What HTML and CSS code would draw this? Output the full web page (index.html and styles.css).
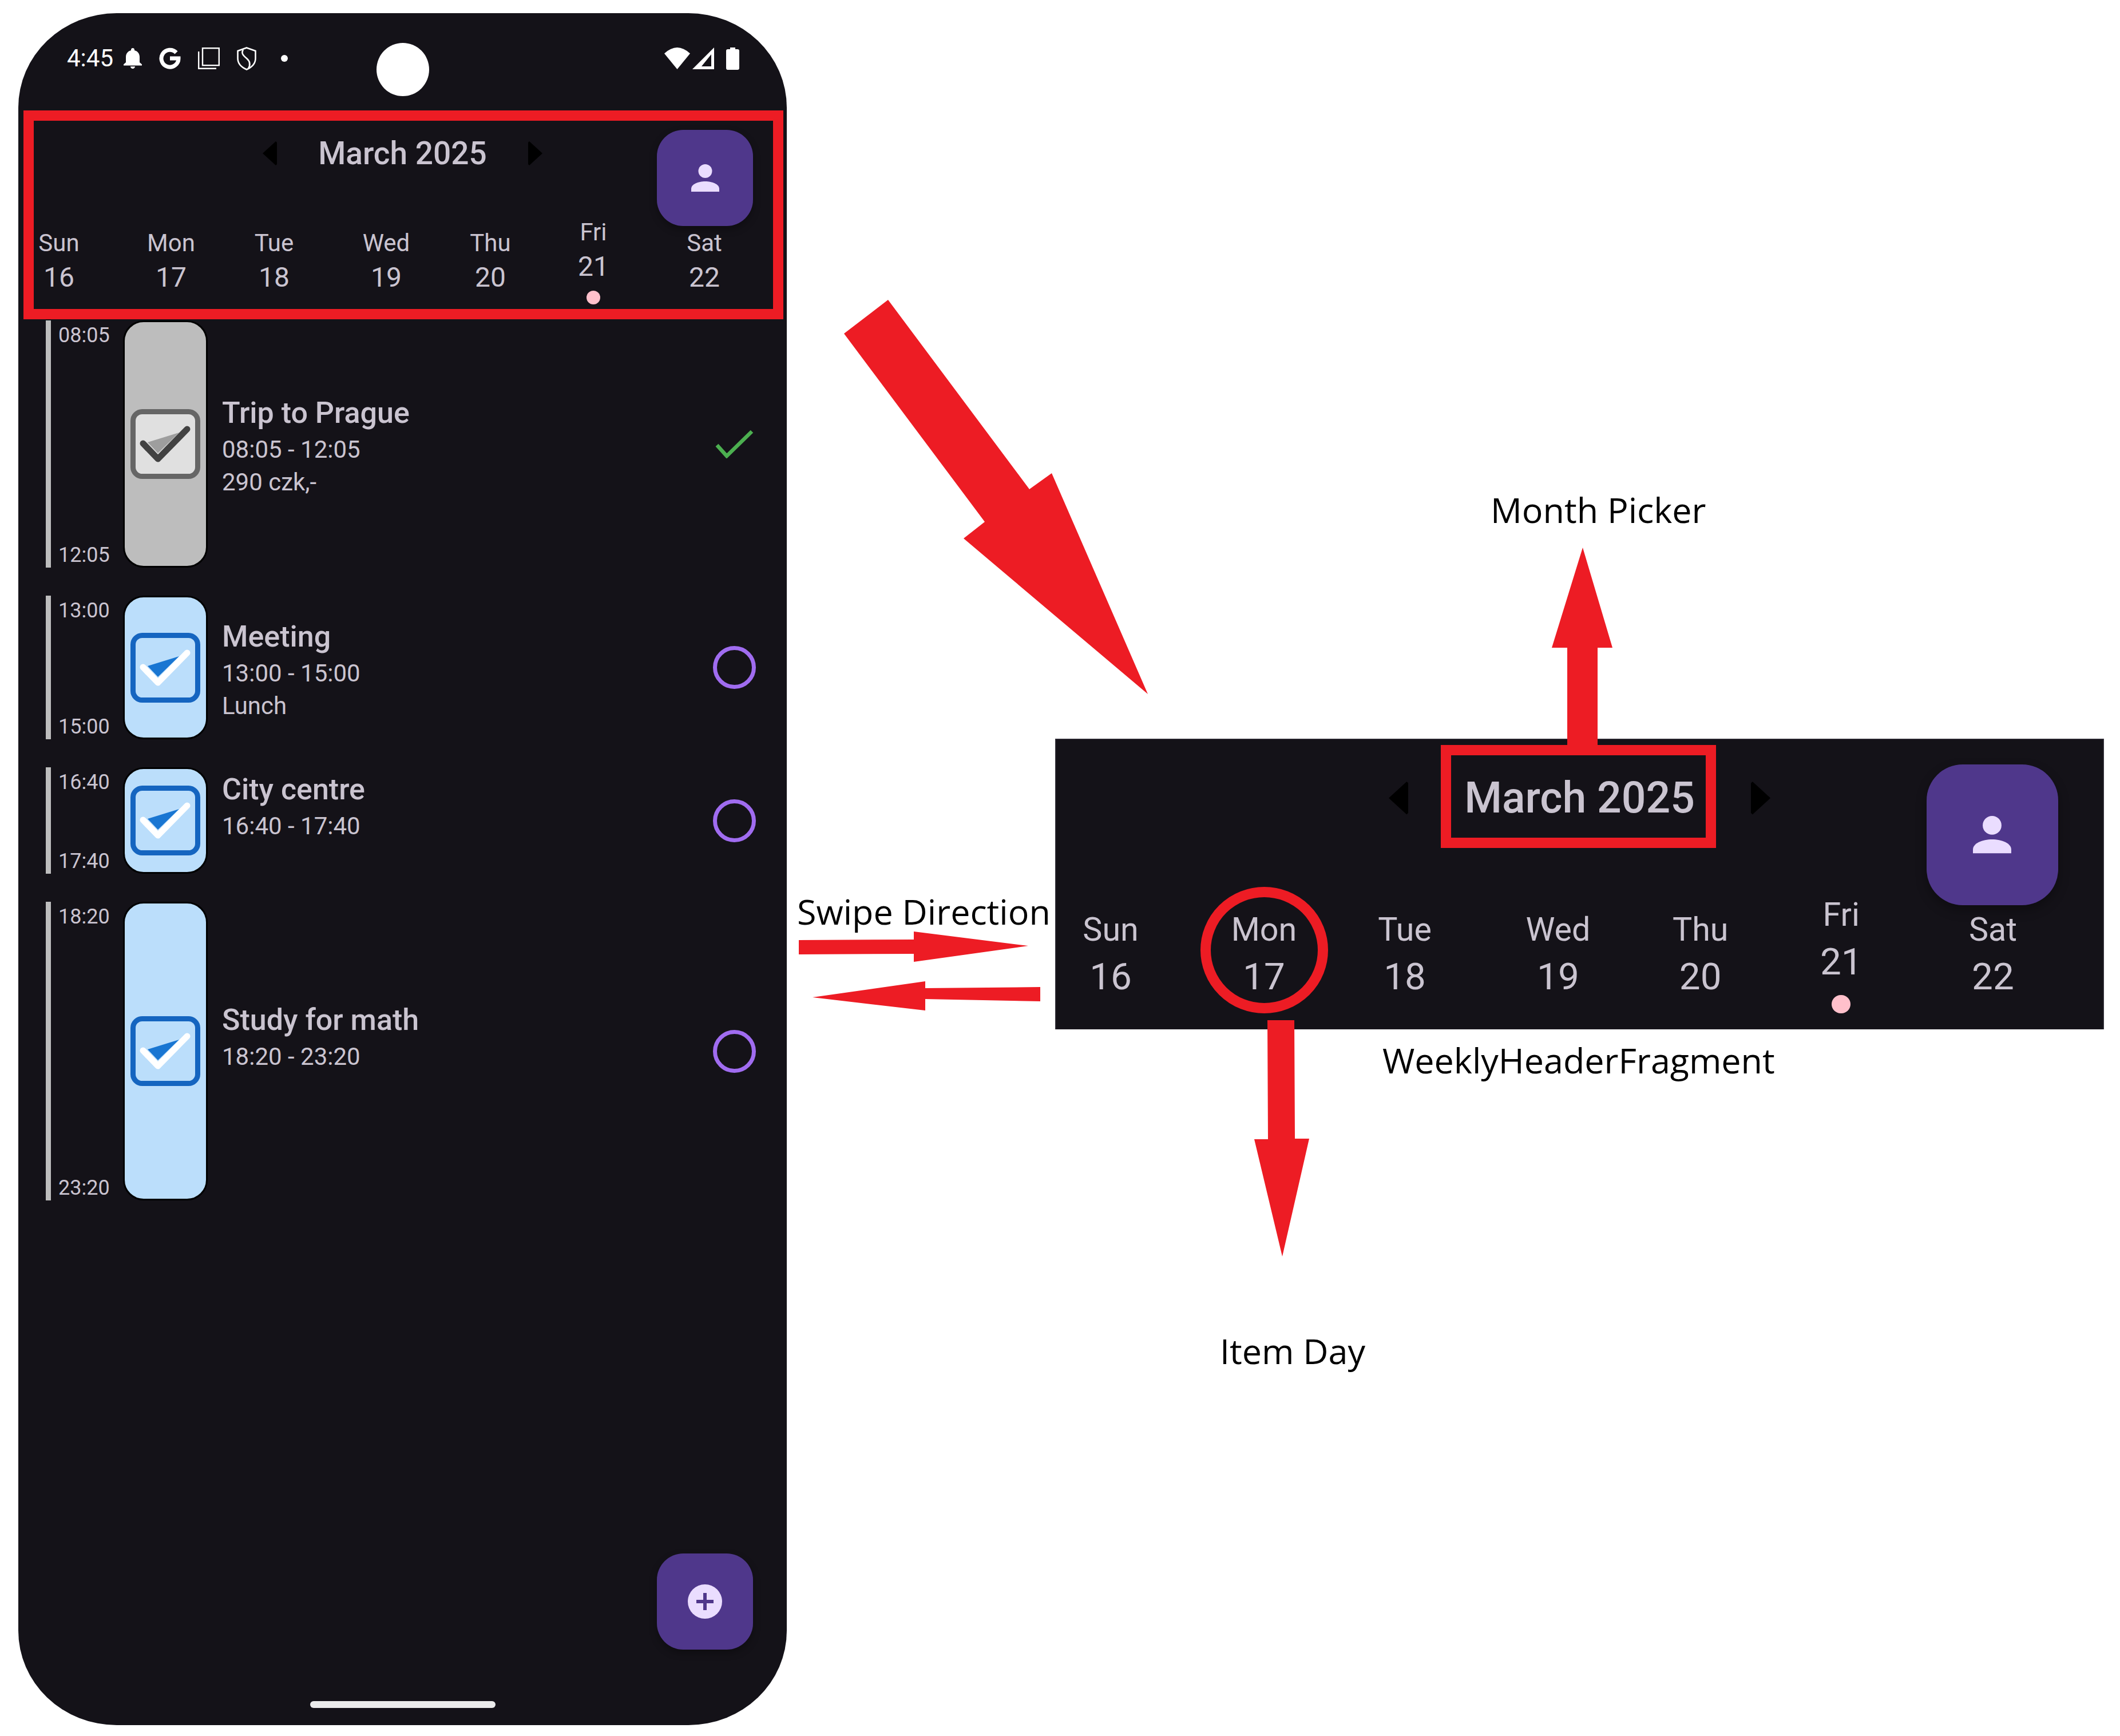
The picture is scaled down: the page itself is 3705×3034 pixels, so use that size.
FILE: index.html
```html
<!DOCTYPE html>
<html lang="en">
<head>
<meta charset="utf-8">
<title>Weekly header annotated</title>
<link rel="stylesheet" href="styles.css">
</head>
<body>
<svg class="defs" width="0" height="0" aria-hidden="true">
  <symbol id="task-icon" viewBox="0 0 122 122">
    <rect class="task-frame" x="4.5" y="4.5" width="113" height="113" rx="16"/>
    <polygon class="task-shade" points="30,58 85,41 48,77"/>
    <polyline class="task-tick" points="22,60 48,87 99,35"/>
  </symbol>
  <symbol id="person" viewBox="0 0 49 48">
    <circle cx="24.5" cy="12" r="12"/>
    <path d="M0 48V43C0 35 12 30 24.5 30S49 35 49 43V48Z"/>
  </symbol>
  <symbol id="chev-left" viewBox="0 0 25 42">
    <polygon points="0,21 23,0 25,2 25,40 23,42"/>
  </symbol>
  <symbol id="chev-right" viewBox="0 0 25 42">
    <polygon points="25,21 2,0 0,2 0,40 2,42"/>
  </symbol>
</svg>

<main class="stage">
  <section class="phone">
    <div class="status-bar">
      <div class="status-left">
        <span class="clock">4:45</span>
        <svg class="ic-bell" viewBox="4 2.5 16 19.5" preserveAspectRatio="none"><path d="M12 22c1.1 0 2-.9 2-2h-4c0 1.1.9 2 2 2zm6-6v-5c0-3.07-1.63-5.64-4.5-6.32V4c0-.83-.67-1.5-1.5-1.5s-1.5.67-1.5 1.5v.68C7.64 5.36 6 7.92 6 11v5l-2 2v1h16v-1l-2-2z"/></svg>
        <svg class="ic-g" viewBox="0 0 38 38"><path d="M30 9A15 15 0 1 0 34 19H19"/></svg>
        <svg class="ic-copy" viewBox="0 0 38 38"><rect x="8" y="1.2" width="28.8" height="30"/><path d="M1.2 7V36.8H32"/></svg>
        <svg class="ic-shield" viewBox="0 0 34 41"><path d="M17 1.5L32.5 7V20C32.5 30 25 36 17 39.5C9 36 1.5 30 1.5 20V7Z"/><path d="M11 5C7 11 11 15 17 20C23 25 24 31 20 38"/></svg>
        <span class="status-dot"></span>
      </div>
      <div class="status-right">
        <svg class="ic-wifi" viewBox="0 0 45 38"><path d="M22.5 38L0 10.5Q22.5-10.5 45 10.5Z"/></svg>
        <svg class="ic-signal" viewBox="0 0 38 38"><path fill-rule="evenodd" d="M0 38L38 0V38ZM16 33H33V12Z"/></svg>
        <svg class="ic-battery" viewBox="0 0 23 39"><path d="M7 0H16V3H20A3 3 0 0 1 23 6V36A3 3 0 0 1 20 39H3A3 3 0 0 1 0 36V6A3 3 0 0 1 3 3H7Z"/></svg>
      </div>
    </div>
    <span class="camera"></span>

    <header class="week-header">
      <div class="month-row">
        <svg class="chev"><use href="#chev-left"/></svg>
        <h1 class="month-title">March 2025</h1>
        <svg class="chev"><use href="#chev-right"/></svg>
      </div>
      <button class="fab profile-btn" type="button" aria-label="Profile"><svg class="person"><use href="#person"/></svg></button>
      <div class="days">
        <div class="day"><span class="day-name">Sun</span><span class="day-num">16</span></div>
        <div class="day"><span class="day-name">Mon</span><span class="day-num">17</span></div>
        <div class="day"><span class="day-name">Tue</span><span class="day-num">18</span></div>
        <div class="day"><span class="day-name">Wed</span><span class="day-num">19</span></div>
        <div class="day"><span class="day-name">Thu</span><span class="day-num">20</span></div>
        <div class="day"><span class="day-name">Fri</span><span class="day-num">21</span><span class="day-dot"></span></div>
        <div class="day"><span class="day-name">Sat</span><span class="day-num">22</span></div>
      </div>
    </header>

    <ul class="agenda">
      <li class="task dur-trip done">
        <div class="rail"><span>08:05</span><span>12:05</span></div>
        <div class="task-card"><svg class="task-icon"><use href="#task-icon"/></svg></div>
        <div class="task-text">
          <h2 class="task-title">Trip to Prague</h2>
          <p class="task-sub">08:05 - 12:05</p>
          <p class="task-sub">290 czk,-</p>
        </div>
        <div class="task-state"><svg class="state-check" viewBox="0 0 67 50"><polyline points="3,27 20,46 64,3"/></svg></div>
      </li>
      <li class="task dur-meeting">
        <div class="rail"><span>13:00</span><span>15:00</span></div>
        <div class="task-card"><svg class="task-icon"><use href="#task-icon"/></svg></div>
        <div class="task-text">
          <h2 class="task-title">Meeting</h2>
          <p class="task-sub">13:00 - 15:00</p>
          <p class="task-sub">Lunch</p>
        </div>
        <div class="task-state"><span class="state-ring"></span></div>
      </li>
      <li class="task dur-city">
        <div class="rail"><span>16:40</span><span>17:40</span></div>
        <div class="task-card"><svg class="task-icon"><use href="#task-icon"/></svg></div>
        <div class="task-text">
          <h2 class="task-title">City centre</h2>
          <p class="task-sub">16:40 - 17:40</p>
          <p class="task-sub"></p>
        </div>
        <div class="task-state"><span class="state-ring"></span></div>
      </li>
      <li class="task dur-study">
        <div class="rail"><span>18:20</span><span>23:20</span></div>
        <div class="task-card"><svg class="task-icon"><use href="#task-icon"/></svg></div>
        <div class="task-text">
          <h2 class="task-title">Study for math</h2>
          <p class="task-sub">18:20 - 23:20</p>
          <p class="task-sub"></p>
        </div>
        <div class="task-state"><span class="state-ring"></span></div>
      </li>
    </ul>

    <button class="fab add-btn" type="button" aria-label="Add">
      <svg class="add-icon" viewBox="0 0 60 60"><circle cx="30" cy="30" r="30"/><path d="M27 15H33V27H45V33H33V45H27V33H15V27H27Z"/></svg>
    </button>
    <span class="home-bar"></span>
  </section>

  <section class="zoom-frame">
    <header class="week-header week-header--zoomed">
      <div class="month-row">
        <svg class="chev"><use href="#chev-left"/></svg>
        <h2 class="month-title">March 2025</h2>
        <svg class="chev"><use href="#chev-right"/></svg>
      </div>
      <button class="fab profile-btn" type="button" aria-label="Profile"><svg class="person"><use href="#person"/></svg></button>
      <div class="days">
        <div class="day"><span class="day-name">Sun</span><span class="day-num">16</span></div>
        <div class="day"><span class="day-name">Mon</span><span class="day-num">17</span></div>
        <div class="day"><span class="day-name">Tue</span><span class="day-num">18</span></div>
        <div class="day"><span class="day-name">Wed</span><span class="day-num">19</span></div>
        <div class="day"><span class="day-name">Thu</span><span class="day-num">20</span></div>
        <div class="day"><span class="day-name">Fri</span><span class="day-num">21</span><span class="day-dot"></span></div>
        <div class="day"><span class="day-name">Sat</span><span class="day-num">22</span></div>
      </div>
    </header>
  </section>

  <svg class="marks" viewBox="0 0 3705 3034">
    <rect class="mark-line" x="50" y="202" width="1310" height="347"/>
    <rect class="mark-line" x="2527" y="1311" width="463" height="162"/>
    <ellipse class="mark-line" cx="2209.5" cy="1660.5" rx="102.5" ry="101.5"/>
    <polygon class="mark-fill" points="1552,524 1475,583 1721,912 1684,941 2006,1213 1838,827 1799,855"/>
    <polygon class="mark-fill" points="2739,1302 2739,1132 2712,1132 2766,957 2818,1132 2792,1132 2792,1302"/>
    <polygon class="mark-fill" points="2215,1783 2262,1783 2263,1990 2288,1990 2241,2196 2192,1991 2216,1991"/>
    <polygon class="mark-fill" points="1396,1643 1597,1642 1597,1628 1797,1653 1597,1681 1597,1667 1396,1668"/>
    <polygon class="mark-fill" points="1818,1725 1617,1727 1617,1715 1420,1743 1617,1766 1617,1746 1818,1750"/>
  </svg>

  <p class="note note-month">Month Picker</p>
  <p class="note note-swipe">Swipe Direction</p>
  <p class="note note-weekly">WeeklyHeaderFragment</p>
  <p class="note note-item">Item Day</p>
</main>
</body>
</html>
```
FILE: styles.css
```css
* { box-sizing: border-box; }
html, body { margin: 0; padding: 0; background: #fff; }
.defs { position: absolute; }
.stage { position: relative; width: 3705px; height: 3034px; overflow: hidden; background: #fff; font-family: Roboto, "Liberation Sans", sans-serif; }

/* phone */
.phone { position: absolute; left: 32px; top: 23px; width: 1343px; height: 2992px; background: #141218; border-radius: 172px / 165px; color: #cac4d0; overflow: hidden; }

.status-bar { height: 169px; padding: 59px 83px 0 85px; display: flex; justify-content: space-between; align-items: flex-start; color: #fff; }
.status-left, .status-right { display: flex; align-items: center; height: 40px; }
.status-left { gap: 30px; }
.status-left svg, .status-right svg { fill: #fff; flex: none; }
.clock { font-size: 42px; line-height: 40px; margin-right: -12px; color: #fff; }
.ic-bell { width: 32px; height: 36px; }
.ic-g { width: 38px; height: 38px; }
.status-left .ic-g { fill: none; stroke: #fff; stroke-width: 7; }
.ic-copy { width: 38px; height: 38px; }
.status-left .ic-copy { fill: none; stroke: #fff; stroke-width: 2.4; }
.ic-shield { width: 34px; height: 41px; }
.status-left .ic-shield { fill: none; stroke: #fff; stroke-width: 2.6; }
.status-dot { width: 12px; height: 12px; border-radius: 50%; background: #fff; margin-left: 13px; }
.status-right { gap: 4px; }
.ic-wifi { width: 45px; height: 38px; }
.ic-signal { width: 38px; height: 38px; }
.ic-battery { width: 23px; height: 39px; margin-left: 17px; }
.camera { position: absolute; left: 626px; top: 52px; width: 92px; height: 93px; border-radius: 50%; background: #fff; }

/* weekly header */
.week-header { position: relative; background: #141218; color: #cac4d0; width: 1343px; height: 368px; padding-top: 44px; }
.month-row { display: flex; justify-content: center; align-items: center; gap: 72px; height: 64px; }
.month-title { margin: 0; font-size: 55px; font-weight: 500; line-height: 64px; white-space: nowrap; }
.chev { width: 25px; height: 42px; fill: #000; flex: none; }
.fab { border: 0; padding: 0; background: #4f378b; border-radius: 46px; display: flex; align-items: center; justify-content: center; box-shadow: 0 6px 14px rgba(0, 0, 0, .3); }
.profile-btn { position: absolute; right: 59px; top: 35px; width: 168px; height: 168px; }
.person { width: 49px; height: 48px; fill: #eaddff; }
.days { margin-top: 80px; padding-left: 1px; display: grid; grid-template-columns: 140px 252px 108px 284px 80px 280px 108px; align-items: center; height: 152px; }
.day { display: flex; flex-direction: column; align-items: center; }
.day-name { font-size: 42px; line-height: 49px; }
.day-num { font-size: 48px; line-height: 56px; margin-top: 8px; }
.day-dot { width: 24px; height: 24px; margin-top: 14px; border-radius: 50%; background: #ffc0cb; }

/* zoomed copy of the header */
.zoom-frame { position: absolute; left: 1844px; top: 1291px; width: 1833px; height: 508px; overflow: hidden; }
.week-header--zoomed { zoom: 1.367; width: 1341px; height: 372px; box-shadow: inset 0 0 0 1px #3a3740; }
.week-header--zoomed .days { margin-top: 92px; }
.week-header--zoomed .profile-btn { top: 33px; height: 180px; }

/* agenda */
.agenda { list-style: none; margin: 0; padding: 0 52px 0 48px; display: flex; flex-direction: column; gap: 49px; }
.task { display: flex; align-items: stretch; }
.dur-trip { height: 432px; }
.dur-meeting { height: 251px; }
.dur-city { height: 186px; }
.dur-study { height: 522px; }
.rail { flex: none; width: 110px; border-left: 9px solid #bdbdbd; padding: 5px 0 1px 13px; display: flex; flex-direction: column; justify-content: space-between; font-size: 36px; line-height: 42px; color: #cac4d0; }
.task-card { flex: none; width: 148px; margin-left: 25px; border: 3px solid #000; border-radius: 36px; background: #bbdefb; display: flex; align-items: center; justify-content: center; --frame: #1565c0; --fill: #bbdefb; --shade: #1976d2; --tick: #fff; }
.done .task-card { background: #bdbdbd; --frame: #666; --fill: #e0e0e0; --shade: #9e9e9e; --tick: #424242; }
.task-icon { width: 122px; height: 122px; }
.task-frame { fill: var(--fill); stroke: var(--frame); stroke-width: 9; }
.task-shade { fill: var(--shade); }
.task-tick { fill: none; stroke: var(--tick); stroke-width: 11; stroke-linecap: round; stroke-linejoin: round; }
.task-text { flex: 1; margin-left: 25px; padding-top: 5px; display: flex; flex-direction: column; justify-content: center; }
.task-title { margin: 0; font-size: 52px; font-weight: 500; line-height: 71px; }
.task-sub { margin: 0; font-size: 42px; line-height: 57px; min-height: 57px; }
.task-state { flex: none; width: 80px; display: flex; align-items: center; justify-content: center; }
.state-ring { width: 75px; height: 75px; border: 7px solid #a06cf0; border-radius: 50%; }
.state-check { width: 67px; height: 50px; fill: none; stroke: #4caf50; stroke-width: 6.5; }

.add-btn { position: absolute; left: 1116px; top: 2692px; width: 168px; height: 168px; }
.add-icon { width: 60px; height: 60px; }
.add-icon circle { fill: #eaddff; }
.add-icon path { fill: #4f378b; }
.home-bar { position: absolute; left: 510px; top: 2950px; width: 324px; height: 12px; border-radius: 6px; background: #ebebeb; }

/* annotations */
.marks { position: absolute; left: 0; top: 0; width: 3705px; height: 3034px; }
.mark-line { fill: none; stroke: #ed1c24; stroke-width: 18; }
.mark-fill { fill: #ed1c24; }
.note { position: absolute; margin: 0; font-family: "Open Sans", "Noto Sans", sans-serif; font-size: 61px; line-height: 61px; color: #000; white-space: nowrap; }
.note-month { left: 2605px; top: 860px; }
.note-swipe { left: 1393px; top: 1562px; }
.note-weekly { left: 2416px; top: 1822px; }
.note-item { left: 2132px; top: 2330px; }
```
